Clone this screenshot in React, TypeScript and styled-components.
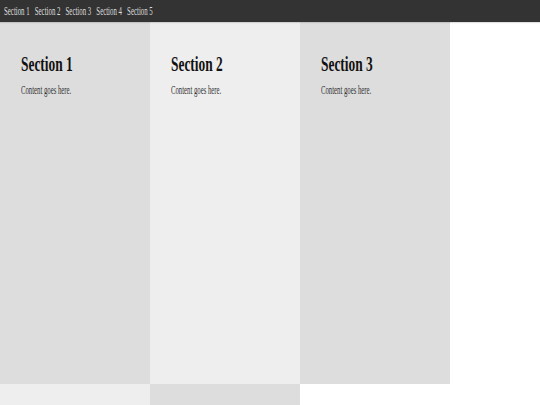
import React from "react";
import styled, { createGlobalStyle } from "styled-components";

const GlobalStyle = createGlobalStyle`
	html, body {
		margin: 0;
		padding: 0;
		overflow: hidden;
		background: #fff;
		font-family: "Liberation Serif", "Times New Roman", serif;
	}
`;

// the type in the picture is narrow, so each text run is squeezed sideways
const Squeeze = styled.span<{ $scale: number }>`
	display: inline-block;
	white-space: nowrap;
	transform: scaleX(${(p) => p.$scale});
	transform-origin: left center;
`;

const NavBar = styled.nav`
	height: 22px;
	background-color: #333;
	padding: 0 4px;
	box-shadow: 0 1px 1px rgba(0, 0, 0, 0.12);
	position: relative;
	z-index: 1;
`;

const NavList = styled.ul`
	display: flex;
	gap: 9px;
	margin: 0;
	padding: 0;
	list-style: none;
`;

const NavLink = styled.a`
	color: #ddd;
	text-decoration: none;
	font-size: 12px;
	line-height: 22px;
`;

const Grid = styled.main`
	display: grid;
	grid-template-columns: repeat(3, 150px);
	grid-auto-rows: 362px;
`;

const Section = styled.section`
	padding: 31px 21px 0;
	background-color: #ddd;

	&:nth-child(even) {
		background-color: #eee;
	}
`;

const Title = styled.h2`
	margin: 0 0 6.5px;
	font-size: 20px;
	font-weight: bold;
	line-height: normal;
	color: #111;
`;

const Body = styled.p`
	margin: 0;
	font-size: 12px;
	line-height: normal;
	color: #333;
`;

const sections = [1, 2, 3, 4, 5];

const App: React.FC = () => {
	return (
		<>
			<GlobalStyle />
			<NavBar>
				<Squeeze $scale={0.57}>
					<NavList>
						{sections.map((n) => (
							<li key={n}>
								<NavLink href={`#section${n}`}>Section {n}</NavLink>
							</li>
						))}
					</NavList>
				</Squeeze>
			</NavBar>
			<Grid>
				{sections.map((n) => (
					<Section key={n} id={`section${n}`}>
						<Title>
							<Squeeze $scale={0.67}>Section {n}</Squeeze>
						</Title>
						<Body>
							<Squeeze $scale={0.56}>Content goes here.</Squeeze>
						</Body>
					</Section>
				))}
			</Grid>
		</>
	);
};

export default App;
